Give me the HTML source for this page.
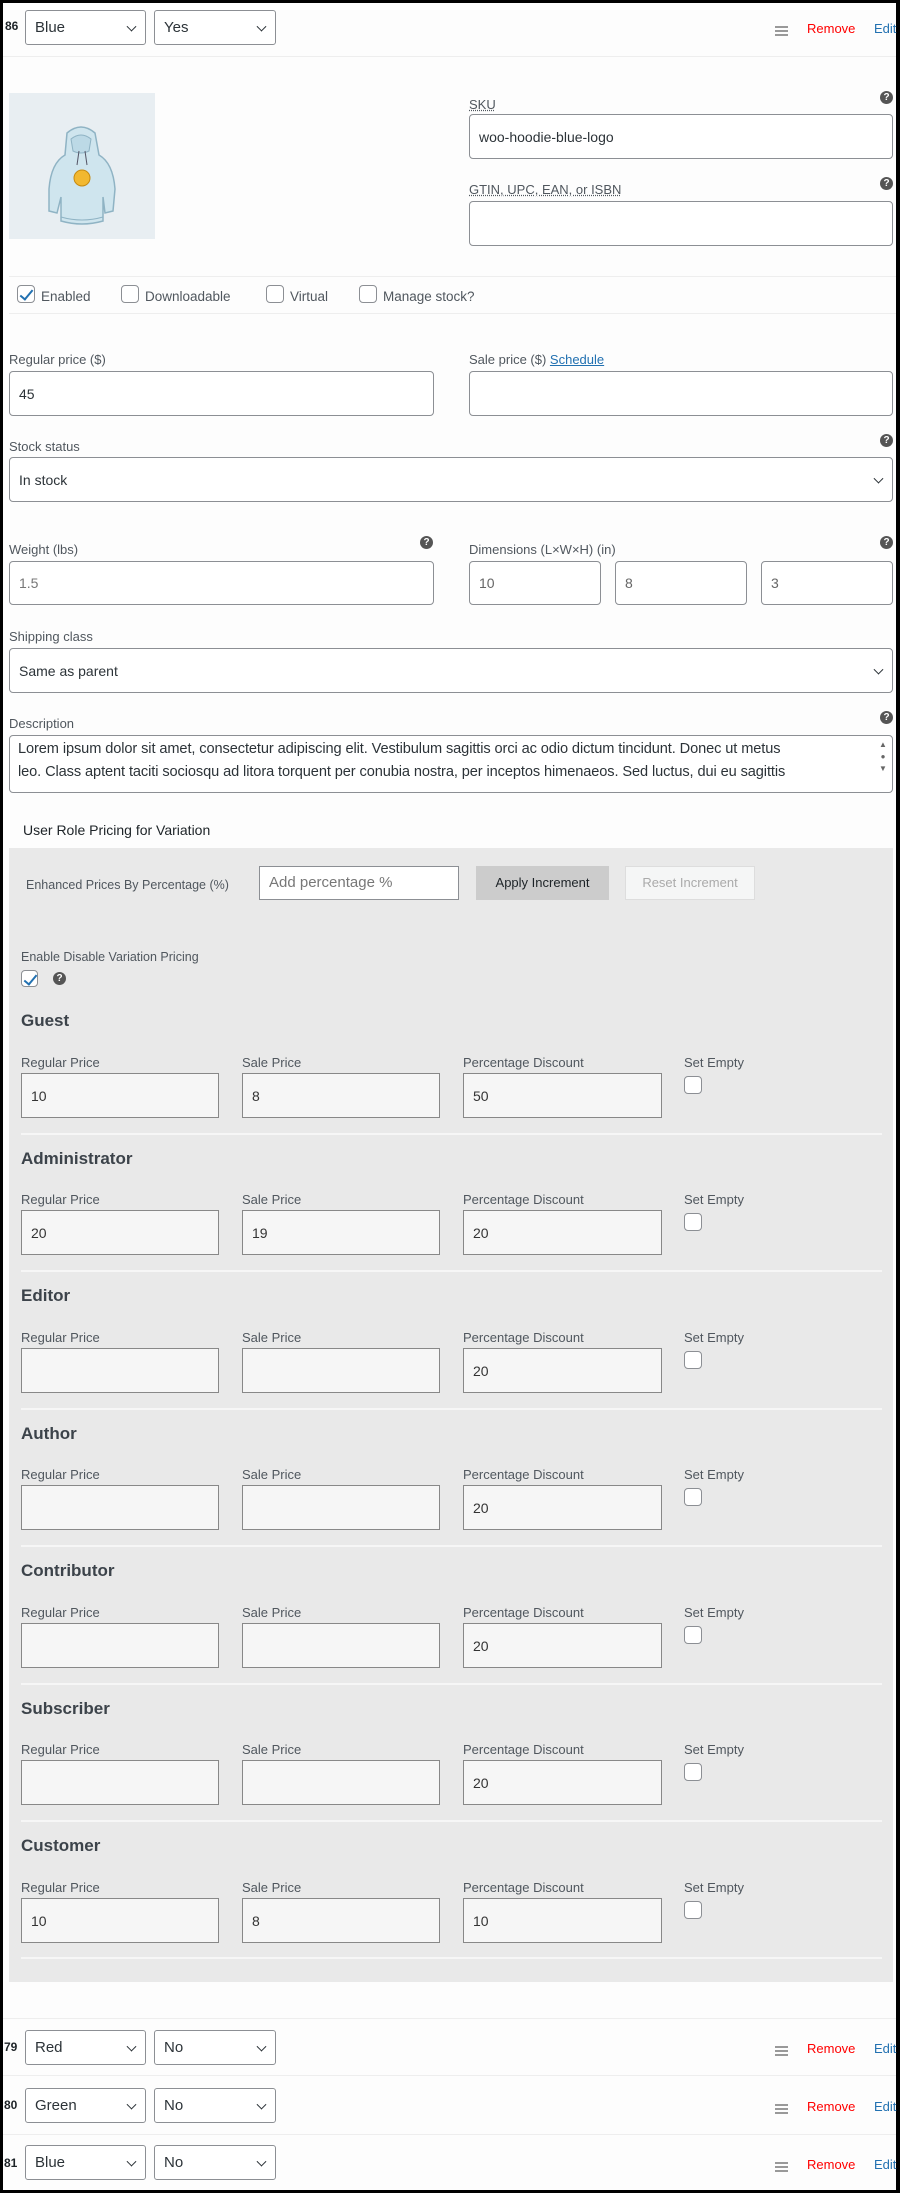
<!DOCTYPE html>
<html><head><meta charset="utf-8"><style>
*{box-sizing:border-box;margin:0;padding:0}
body{width:900px;height:2193px;background:#000;font-family:"Liberation Sans",sans-serif;color:#3c434a;position:relative;overflow:hidden}
#page{position:absolute;left:3px;top:3px;width:893px;height:2187px;background:#fdfdfd}
.a{position:absolute}
.lbl{position:absolute;font-size:13px;color:#50575e;white-space:nowrap}
.inp{position:absolute;background:#fff;border:1px solid #8c8f94;border-radius:4px;font-size:14px;color:#2c3338;padding-left:9px;display:flex;align-items:center}
.sel{position:absolute;background:#fff;border:1px solid #8c8f94;border-radius:3px;font-size:15px;color:#2c3338;padding-left:9px;display:flex;align-items:center}
.chev{position:absolute;right:10px;top:50%;width:7px;height:7px;border-right:1.6px solid #2c3338;border-bottom:1.6px solid #2c3338;transform:translateY(-70%) rotate(45deg)}
.help{position:absolute;width:13px;height:13px;border-radius:50%;background:#555;color:#fff;font-size:10px;font-weight:bold;text-align:center;line-height:13px}
.hr{position:absolute;height:1px;background:#eee}
.cb{position:absolute;width:18px;height:18px;border:1px solid #8c8f94;border-radius:4px;background:#fff}
.cb.on::after{content:"";position:absolute;left:5px;top:1px;width:5px;height:11px;border-right:2px solid #2271b1;border-bottom:2px solid #2271b1;transform:rotate(40deg)}
.pin{position:absolute;background:#f6f6f6;border:1px solid #888;font-size:14px;color:#333;padding-left:9px;display:flex;align-items:center}
.plbl{position:absolute;font-size:13px;color:#50575e}
.role{position:absolute;font-size:17px;font-weight:bold;color:#3c434a}
.num{position:absolute;font-size:12px;font-weight:bold;color:#1d2327}
.ham{position:absolute;width:13px;height:10px;border-top:2px solid #999;border-bottom:2px solid #999}
.ham::after{content:"";position:absolute;left:0;right:0;top:2px;height:2px;background:#999}
.rem{position:absolute;font-size:13px;color:#f00}
.edi{position:absolute;font-size:13px;color:#2271b1}
.dl{white-space:nowrap;display:block}
</style></head><body><div id="page">
<div class="num" style="left:2px;top:16px">86</div>
<div class="sel" style="left:22px;top:7px;width:121px;height:35px">Blue<span class="chev"></span></div>
<div class="sel" style="left:151px;top:7px;width:122px;height:35px">Yes<span class="chev"></span></div>
<div class="ham" style="left:772px;top:23px"></div>
<div class="rem" style="left:804px;top:18px">Remove</div>
<div class="edi" style="left:871px;top:18px">Edit</div>
<div class="hr" style="left:0;top:53px;width:893px"></div>

<div class="a" style="left:6px;top:90px;width:146px;height:146px;background:#e8eef2">
<svg width="146" height="146" viewBox="0 0 146 146">
<path d="M58 40 Q72 28 86 40 L90 62 Q104 70 106 96 L104 118 L96 120 L94 104 L94 128 Q73 134 52 128 L52 104 L48 120 L40 118 L40 96 Q42 70 56 62 Z" fill="#cfe5ee" stroke="#8fb3c4" stroke-width="1.5"/>
<path d="M62 46 Q72 38 82 46 L80 58 Q72 62 64 58 Z" fill="#bcd9e6" stroke="#8fb3c4"/>
<path d="M70 58 L68 72 M76 58 L78 72" stroke="#556" stroke-width="1"/>
<circle cx="73" cy="85" r="8" fill="#f2b830" stroke="#c68a10"/>
<path d="M52 124 Q73 130 94 124" stroke="#8fb3c4" fill="none"/>
</svg></div>

<div class="lbl" style="left:466px;top:94px;text-decoration:underline dotted">SKU</div>
<div class="help" style="left:877px;top:88px">?</div>
<div class="inp" style="left:466px;top:111px;width:424px;height:45px">woo-hoodie-blue-logo</div>
<div class="lbl" style="left:466px;top:179px;text-decoration:underline dotted">GTIN, UPC, EAN, or ISBN</div>
<div class="help" style="left:877px;top:174px">?</div>
<div class="inp" style="left:466px;top:198px;width:424px;height:45px"></div>
<div class="hr" style="left:6px;top:273px;width:887px"></div>

<div class="cb on" style="left:14px;top:282px"></div>
<div class="lbl" style="left:38px;top:286px;font-size:13.5px">Enabled</div>
<div class="cb" style="left:118px;top:282px"></div>
<div class="lbl" style="left:142px;top:286px;font-size:13.5px">Downloadable</div>
<div class="cb" style="left:263px;top:282px"></div>
<div class="lbl" style="left:287px;top:286px;font-size:13.5px">Virtual</div>
<div class="cb" style="left:356px;top:282px"></div>
<div class="lbl" style="left:380px;top:286px;font-size:13.5px">Manage stock?</div>
<div class="hr" style="left:6px;top:310px;width:887px"></div>

<div class="lbl" style="left:6px;top:349px">Regular price ($)</div>
<div class="inp" style="left:6px;top:368px;width:425px;height:45px">45</div>
<div class="lbl" style="left:466px;top:349px">Sale price ($) <span style="color:#2271b1;text-decoration:underline">Schedule</span></div>
<div class="inp" style="left:466px;top:368px;width:424px;height:45px"></div>

<div class="lbl" style="left:6px;top:436px">Stock status</div>
<div class="help" style="left:877px;top:431px">?</div>
<div class="sel" style="left:6px;top:454px;width:884px;height:45px;border-radius:4px;font-size:14px">In stock<span class="chev"></span></div>

<div class="lbl" style="left:6px;top:539px">Weight (lbs)</div>
<div class="help" style="left:417px;top:533px">?</div>
<div class="inp" style="left:6px;top:558px;width:425px;height:44px;color:#777">1.5</div>
<div class="lbl" style="left:466px;top:539px">Dimensions (L×W×H) (in)</div>
<div class="help" style="left:877px;top:533px">?</div>
<div class="inp" style="left:466px;top:558px;width:132px;height:44px;color:#666">10</div>
<div class="inp" style="left:612px;top:558px;width:132px;height:44px;color:#666">8</div>
<div class="inp" style="left:758px;top:558px;width:132px;height:44px;color:#666">3</div>

<div class="lbl" style="left:6px;top:626px">Shipping class</div>
<div class="sel" style="left:6px;top:645px;width:884px;height:45px;border-radius:4px;font-size:14px">Same as parent<span class="chev"></span></div>

<div class="lbl" style="left:6px;top:713px">Description</div>
<div class="help" style="left:877px;top:708px">?</div>
<div class="a" style="left:6px;top:732px;width:884px;height:58px;background:#fff;border:1px solid #8c8f94;border-radius:4px;overflow:hidden;padding:2px 20px 0 8px;font-size:14.6px;line-height:23px;color:#2c3338;letter-spacing:-0.1px"><span class="dl">Lorem ipsum dolor sit amet, consectetur adipiscing elit. Vestibulum sagittis orci ac odio dictum tincidunt. Donec ut metus</span><span class="dl">leo. Class aptent taciti sociosqu ad litora torquent per conubia nostra, per inceptos himenaeos. Sed luctus, dui eu sagittis</span></div>
<div class="a" style="left:875px;top:736px;width:10px;height:50px;font-size:8px;color:#666;text-align:center;line-height:12px">▲<br>●<br>▼</div>

<div class="lbl" style="left:20px;top:819px;font-size:14px;color:#1d2327">User Role Pricing for Variation</div>

<div class="a" style="left:6px;top:845px;width:884px;height:1134px;background:#e9e9e9"></div>
<div class="lbl" style="left:23px;top:875px;font-size:12.5px">Enhanced Prices By Percentage (%)</div>
<div class="a" style="left:256px;top:863px;width:200px;height:34px;background:#fff;border:1px solid #8c8f94;font-size:15px;color:#777;padding:7px 0 0 9px">Add percentage %</div>
<div class="a" style="left:473px;top:863px;width:133px;height:34px;background:#ccc;font-size:13px;color:#1d2327;text-align:center;line-height:34px">Apply Increment</div>
<div class="a" style="left:622px;top:863px;width:130px;height:34px;background:#f5f6f6;border:1px solid #ddd;font-size:13px;color:#aaa;text-align:center;line-height:32px">Reset Increment</div>

<div class="plbl" style="left:18px;top:947px;font-size:12.5px">Enable Disable Variation Pricing</div>
<div class="cb on" style="left:18px;top:967px;width:17px;height:17px"></div>
<div class="help" style="left:50px;top:969px">?</div>

<div class="hr" style="left:0;top:2015px;width:893px"></div>
<div class="num" style="left:1px;top:2037px">79</div>
<div class="sel" style="left:22px;top:2027px;width:121px;height:35px">Red<span class="chev"></span></div>
<div class="sel" style="left:151px;top:2027px;width:122px;height:35px">No<span class="chev"></span></div>
<div class="ham" style="left:772px;top:2043px"></div>
<div class="rem" style="left:804px;top:2038px">Remove</div>
<div class="edi" style="left:871px;top:2038px">Edit</div>
<div class="hr" style="left:0;top:2072px;width:893px"></div>
<div class="num" style="left:1px;top:2095px">80</div>
<div class="sel" style="left:22px;top:2085px;width:121px;height:35px">Green<span class="chev"></span></div>
<div class="sel" style="left:151px;top:2085px;width:122px;height:35px">No<span class="chev"></span></div>
<div class="ham" style="left:772px;top:2101px"></div>
<div class="rem" style="left:804px;top:2096px">Remove</div>
<div class="edi" style="left:871px;top:2096px">Edit</div>
<div class="hr" style="left:0;top:2131px;width:893px"></div>
<div class="num" style="left:1px;top:2153px">81</div>
<div class="sel" style="left:22px;top:2142px;width:121px;height:35px">Blue<span class="chev"></span></div>
<div class="sel" style="left:151px;top:2142px;width:122px;height:35px">No<span class="chev"></span></div>
<div class="ham" style="left:772px;top:2159px"></div>
<div class="rem" style="left:804px;top:2154px">Remove</div>
<div class="edi" style="left:871px;top:2154px">Edit</div>

<div class="role" style="left:18px;top:1008px">Guest</div>
<div class="plbl" style="left:18px;top:1052px">Regular Price</div><div class="plbl" style="left:239px;top:1052px">Sale Price</div><div class="plbl" style="left:460px;top:1052px">Percentage Discount</div><div class="plbl" style="left:681px;top:1052px">Set Empty</div>
<div class="pin" style="left:18px;top:1070px;width:198px;height:45px">10</div><div class="pin" style="left:239px;top:1070px;width:198px;height:45px">8</div><div class="pin" style="left:460px;top:1070px;width:199px;height:45px">50</div><div class="cb" style="left:681px;top:1073px"></div>
<div class="hr" style="left:18px;top:1130px;width:861px;background:#f6f6f6;height:2px"></div>

<div class="role" style="left:18px;top:1146px">Administrator</div>
<div class="plbl" style="left:18px;top:1189px">Regular Price</div><div class="plbl" style="left:239px;top:1189px">Sale Price</div><div class="plbl" style="left:460px;top:1189px">Percentage Discount</div><div class="plbl" style="left:681px;top:1189px">Set Empty</div>
<div class="pin" style="left:18px;top:1207px;width:198px;height:45px">20</div><div class="pin" style="left:239px;top:1207px;width:198px;height:45px">19</div><div class="pin" style="left:460px;top:1207px;width:199px;height:45px">20</div><div class="cb" style="left:681px;top:1210px"></div>
<div class="hr" style="left:18px;top:1267px;width:861px;background:#f6f6f6;height:2px"></div>

<div class="role" style="left:18px;top:1283px">Editor</div>
<div class="plbl" style="left:18px;top:1327px">Regular Price</div><div class="plbl" style="left:239px;top:1327px">Sale Price</div><div class="plbl" style="left:460px;top:1327px">Percentage Discount</div><div class="plbl" style="left:681px;top:1327px">Set Empty</div>
<div class="pin" style="left:18px;top:1345px;width:198px;height:45px"></div><div class="pin" style="left:239px;top:1345px;width:198px;height:45px"></div><div class="pin" style="left:460px;top:1345px;width:199px;height:45px">20</div><div class="cb" style="left:681px;top:1348px"></div>
<div class="hr" style="left:18px;top:1405px;width:861px;background:#f6f6f6;height:2px"></div>

<div class="role" style="left:18px;top:1421px">Author</div>
<div class="plbl" style="left:18px;top:1464px">Regular Price</div><div class="plbl" style="left:239px;top:1464px">Sale Price</div><div class="plbl" style="left:460px;top:1464px">Percentage Discount</div><div class="plbl" style="left:681px;top:1464px">Set Empty</div>
<div class="pin" style="left:18px;top:1482px;width:198px;height:45px"></div><div class="pin" style="left:239px;top:1482px;width:198px;height:45px"></div><div class="pin" style="left:460px;top:1482px;width:199px;height:45px">20</div><div class="cb" style="left:681px;top:1485px"></div>
<div class="hr" style="left:18px;top:1542px;width:861px;background:#f6f6f6;height:2px"></div>

<div class="role" style="left:18px;top:1558px">Contributor</div>
<div class="plbl" style="left:18px;top:1602px">Regular Price</div><div class="plbl" style="left:239px;top:1602px">Sale Price</div><div class="plbl" style="left:460px;top:1602px">Percentage Discount</div><div class="plbl" style="left:681px;top:1602px">Set Empty</div>
<div class="pin" style="left:18px;top:1620px;width:198px;height:45px"></div><div class="pin" style="left:239px;top:1620px;width:198px;height:45px"></div><div class="pin" style="left:460px;top:1620px;width:199px;height:45px">20</div><div class="cb" style="left:681px;top:1623px"></div>
<div class="hr" style="left:18px;top:1680px;width:861px;background:#f6f6f6;height:2px"></div>

<div class="role" style="left:18px;top:1696px">Subscriber</div>
<div class="plbl" style="left:18px;top:1739px">Regular Price</div><div class="plbl" style="left:239px;top:1739px">Sale Price</div><div class="plbl" style="left:460px;top:1739px">Percentage Discount</div><div class="plbl" style="left:681px;top:1739px">Set Empty</div>
<div class="pin" style="left:18px;top:1757px;width:198px;height:45px"></div><div class="pin" style="left:239px;top:1757px;width:198px;height:45px"></div><div class="pin" style="left:460px;top:1757px;width:199px;height:45px">20</div><div class="cb" style="left:681px;top:1760px"></div>
<div class="hr" style="left:18px;top:1817px;width:861px;background:#f6f6f6;height:2px"></div>

<div class="role" style="left:18px;top:1833px">Customer</div>
<div class="plbl" style="left:18px;top:1877px">Regular Price</div><div class="plbl" style="left:239px;top:1877px">Sale Price</div><div class="plbl" style="left:460px;top:1877px">Percentage Discount</div><div class="plbl" style="left:681px;top:1877px">Set Empty</div>
<div class="pin" style="left:18px;top:1895px;width:198px;height:45px">10</div><div class="pin" style="left:239px;top:1895px;width:198px;height:45px">8</div><div class="pin" style="left:460px;top:1895px;width:199px;height:45px">10</div><div class="cb" style="left:681px;top:1898px"></div>
<div class="hr" style="left:18px;top:1954px;width:861px;background:#f6f6f6;height:2px"></div>
</div></body></html>
